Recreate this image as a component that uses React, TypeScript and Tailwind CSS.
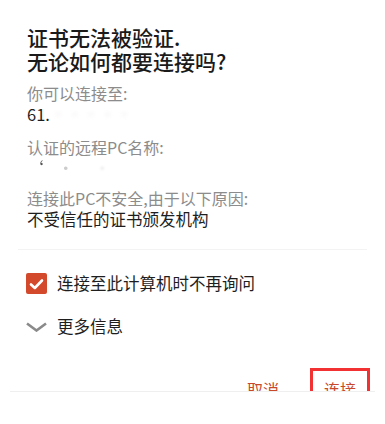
import React from "react";

const FONT = "font-['Noto_Sans_CJK_SC','Noto_Sans',sans-serif]";

// label / value pair in the info block
function InfoLabel({ children, className = "" }: { children: React.ReactNode; className?: string }) {
  return <div className={`text-[16px] leading-[21px] text-[#8c8c8c] ${className}`}>{children}</div>;
}

function InfoValue({ children, className = "" }: { children: React.ReactNode; className?: string }) {
  return <div className={`text-[16.5px] leading-[21px] text-[#1e1e1e] ${className}`}>{children}</div>;
}

export default function App() {
  return (
    <div className={`w-[385px] h-[424px] bg-white overflow-hidden ${FONT}`}>
      {/* Title */}
      <div className="pl-[27px] pt-[25px] text-[21px] leading-[24px] text-[#1a1a1a] font-medium">
        <div>证书无法被验证.</div>
        <div>无论如何都要连接吗?</div>
      </div>

      {/* Details */}
      <div className="pl-[27px]">
        <InfoLabel className="mt-[10px]">你可以连接至:</InfoLabel>
        <InfoValue>
          61.<span className="text-[#f0f0f0] blur-[2px]">·····</span>
        </InfoValue>
        <InfoLabel className="mt-[12px]">认证的远程PC名称:</InfoLabel>
        <InfoValue className="text-[#555]">
          <span className="blur-[0.6px]">‘</span>
          <span className="ml-[14px] text-[#ccc] blur-[0.6px]">·</span>
          <span className="ml-[20px] text-[#eee] blur-[1px]">·</span>
        </InfoValue>
        <InfoLabel className="mt-[9px]">连接此PC不安全,由于以下原因:</InfoLabel>
        <InfoValue>不受信任的证书颁发机构</InfoValue>
      </div>

      {/* Divider */}
      <div className="mx-[18px] mt-[19px] h-px bg-[#f3f3f3]" />

      {/* Checkbox */}
      <div className="mt-[23px] pl-[26px] flex items-center gap-[10px]">
        <div className="w-[21px] h-[21px] rounded-[2px] bg-[#d3492b] flex items-center justify-center">
          <svg width="15" height="12" viewBox="0 0 15 12">
            <polyline points="2,6.5 5.8,10 13,2.5" fill="none" stroke="white" strokeWidth="2.6" strokeLinecap="round" strokeLinejoin="round" />
          </svg>
        </div>
        <span className="text-[16.5px] leading-[21px] text-[#1e1e1e]">连接至此计算机时不再询问</span>
      </div>

      {/* More info */}
      <div className="mt-[22px] pl-[26px] flex items-center gap-[10px]">
        <svg width="21" height="10" viewBox="0 0 21 10">
          <polyline points="1,1.5 10.5,8.5 20,1.5" fill="none" stroke="#8a8a8a" strokeWidth="2.6" />
        </svg>
        <span className="text-[16.5px] leading-[21px] text-[#1e1e1e]">更多信息</span>
      </div>

      {/* Buttons, clipped */}
      <div className="mt-[31px] h-[23px] overflow-hidden flex justify-end pr-[15px] text-[#c9482a] text-[16px] leading-[21px]">
        <div className="w-[60px] pt-[11px] text-center mr-[17px]">取消</div>
        <div className="w-[60px] pt-[8px] text-center border-t-[3px] border-x-[3px] border-[#f23232]">
          连接
        </div>
      </div>
      <div className="mx-[10px] h-px bg-[#efefef]" />
    </div>
  );
}
